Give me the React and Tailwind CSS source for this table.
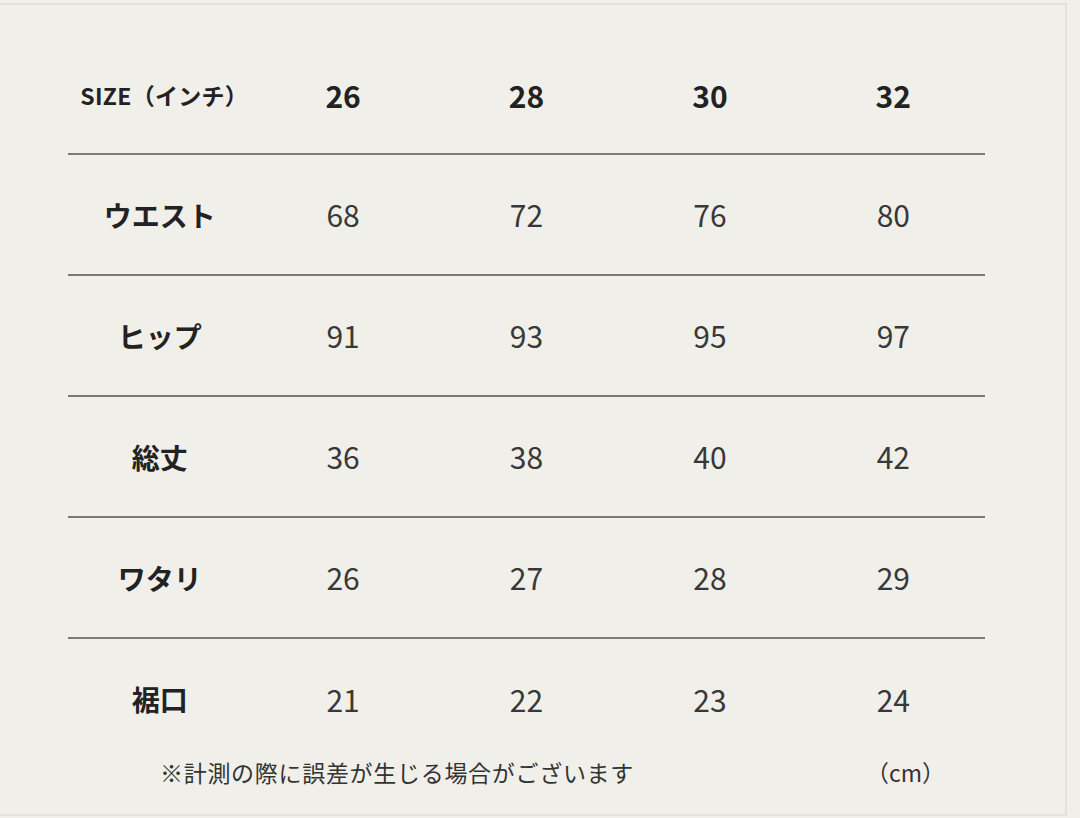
import React from "react";

const sizes = ["26", "28", "30", "32"];

const rows = [
  { label: "ウエスト", values: ["68", "72", "76", "80"] },
  { label: "ヒップ", values: ["91", "93", "95", "97"] },
  { label: "総丈", values: ["36", "38", "40", "42"] },
  { label: "ワタリ", values: ["26", "27", "28", "29"] },
  { label: "裾口", values: ["21", "22", "23", "24"] },
];

const font = { fontFamily: '"Noto Sans CJK JP", "Noto Sans", sans-serif' };

function App() {
  return (
    <div className="w-[1080px] h-[818px] bg-[#f0efe9] pt-[3px] overflow-hidden" style={font}>
      <div className="ml-[-4px] w-[1071px] h-[813px] border-t-2 border-r-2 border-b-2 border-[#e2e1dc] pl-[72px]">
        <div className="w-[917px] mt-[36px]">
          {/* header */}
          <div className="grid grid-cols-5 h-[114px] pb-[4px] items-center border-b-2 border-[#7a7a78]">
            <div className="text-center text-[23px] font-bold text-[#222] pl-[9px] tracking-[0.3px]">SIZE（インチ）</div>
            {sizes.map((s) => (
              <div key={s} className="text-center text-[30px] font-bold text-[#222]">
                {s}
              </div>
            ))}
          </div>

          {rows.map((r, i) => (
            <div
              key={r.label}
              className={
                i < rows.length - 1
                  ? "grid grid-cols-5 h-[121px] items-center border-b-2 border-[#7a7a78]"
                  : "grid grid-cols-5 h-[120px] items-center"
              }
            >
              <div className="text-center text-[28px] font-bold text-[#222]">{r.label}</div>
              {r.values.map((v, j) => (
                <div key={j} className="text-center text-[30px] text-[#383838]">
                  {v}
                </div>
              ))}
            </div>
          ))}

          {/* note */}
          <div className="flex items-center h-[26px] text-[23px] leading-[26px] text-[#333]">
            <div className="ml-[92px] tracking-[0.7px]">※計測の際に誤差が生じる場合がございます</div>
            <div className="ml-auto mr-[40px]">（cm）</div>
          </div>
        </div>
      </div>
    </div>
  );
}

export default App;
